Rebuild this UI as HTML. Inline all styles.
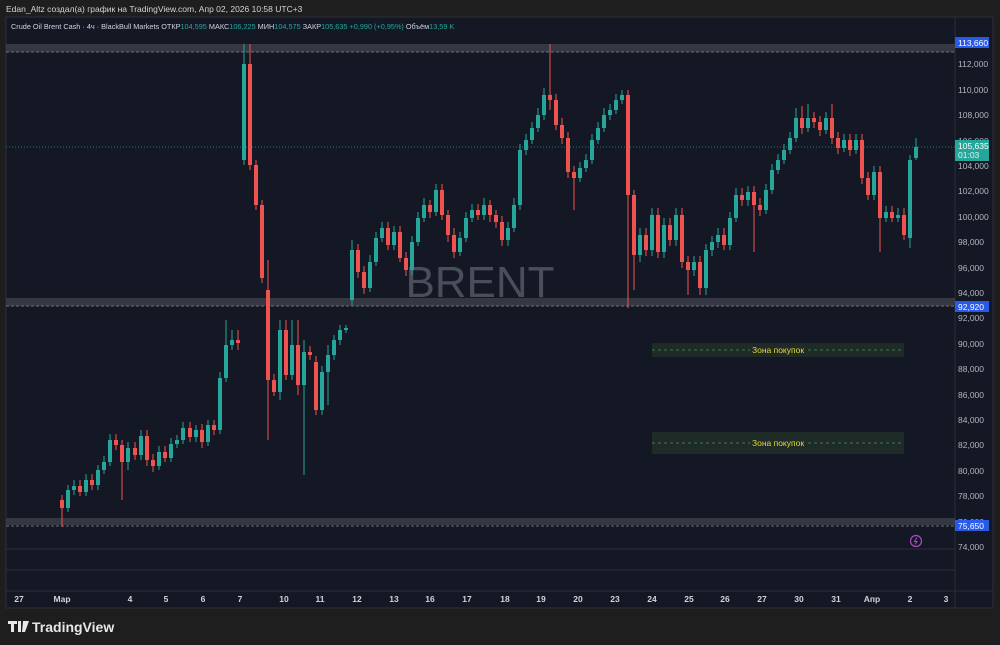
<!DOCTYPE html>
<html><head><meta charset="utf-8"><style>
html,body{margin:0;padding:0;background:#1e1e1e;width:1000px;height:645px;overflow:hidden;font-family:"Liberation Sans","Noto Sans CJK SC",sans-serif}
svg text{font-family:"Liberation Sans","Noto Sans CJK SC",sans-serif}
</style></head><body>
<svg width="1000" height="645" xmlns="http://www.w3.org/2000/svg">
<rect width="1000" height="645" fill="#1e1e1e"/>
<text x="6" y="12" font-size="8.5" fill="#d1d4dc">Edan_Altz создал(а) график на TradingView.com, Апр 02, 2026 10:58 UTC+3</text>
<rect x="6" y="17" width="987" height="591" fill="#141824" stroke="#2e3038"/>
<line x1="6" y1="549" x2="955" y2="549" stroke="#2a2e39"/>
<line x1="6" y1="570" x2="955" y2="570" stroke="#2a2e39"/>
<line x1="6" y1="591" x2="993" y2="591" stroke="#2a2e39"/>
<line x1="955" y1="17" x2="955" y2="608" stroke="#2a2e39"/>
<text x="480" y="297" font-size="44" fill="#4a4e5a" text-anchor="middle">BRENT</text>
<rect x="6" y="44" width="949" height="8" fill="#3b3e48" opacity="0.85"/>
<line x1="6" y1="52" x2="955" y2="52" stroke="#6b6f7a" stroke-dasharray="3,2"/>
<rect x="6" y="298" width="949" height="8" fill="#3b3e48" opacity="0.85"/>
<line x1="6" y1="306" x2="955" y2="306" stroke="#6b6f7a" stroke-dasharray="3,2"/>
<rect x="6" y="518" width="949" height="7" fill="#3b3e48" opacity="0.85"/>
<line x1="6" y1="526" x2="955" y2="526" stroke="#6b6f7a" stroke-dasharray="3,2"/>
<rect x="652" y="343" width="252" height="14" fill="#1f2b26"/>
<line x1="652" y1="350" x2="904" y2="350" stroke="#3f7a50" stroke-dasharray="3,3"/>
<rect x="750" y="344" width="56" height="12" fill="#1f2b26"/>
<text x="778" y="353" font-size="8.5" fill="#e5d83a" text-anchor="middle">Зона покупок</text>
<rect x="652" y="432" width="252" height="22" fill="#1f2b26"/>
<line x1="652" y1="443" x2="904" y2="443" stroke="#3f7a50" stroke-dasharray="3,3"/>
<rect x="750" y="437" width="56" height="12" fill="#1f2b26"/>
<text x="778" y="446" font-size="8.5" fill="#e5d83a" text-anchor="middle">Зона покупок</text>
<line x1="6" y1="147" x2="955" y2="147" stroke="#26a69a" stroke-dasharray="1,2" opacity="0.7"/>

<path stroke="#26a69a" stroke-width="1" fill="none" d="M68 485V512 M74 480V495 M86 474V496 M98 465V490 M104 456V474 M110 434V466 M128 442V470 M141 430V460 M159 446V470 M171 438V462 M177 435V448 M183 422V444 M196 425V442 M208 420V446 M220 372V434 M226 320V382 M232 330V350 M244 44V165 M280 320V400 M292 320V380 M304 340V475 M322 366V415 M328 345V405 M334 335V360 M340 325V345 M346 325V333 M352 240V305 M370 255V292 M376 232V266 M382 222V242 M394 226V250 M412 236V275 M418 212V246 M424 198V222 M436 184V216 M460 232V256 M466 212V242 M472 204V222 M484 198V220 M508 222V246 M514 198V232 M520 144V210 M526 134V155 M532 122V144 M538 108V132 M544 88V120 M580 162V182 M586 154V172 M592 134V164 M598 122V144 M604 108V132 M610 104V120 M616 94V114 M622 90V104 M640 228V262 M652 208V256 M664 218V258 M676 208V246 M694 256V276 M706 244V295 M712 236V256 M718 228V248 M730 212V250 M736 188V222 M748 186V206 M766 184V214 M772 164V194 M778 154V174 M784 144V164 M790 132V154 M796 108V142 M808 104V132 M826 112V134 M844 134V152 M856 134V154 M874 166V200 M886 206V222 M898 208V222 M910 155V248 M916 138V160"/>
<path stroke="#ef5350" stroke-width="1" fill="none" d="M62 495V527 M80 480V496 M92 474V490 M116 434V450 M122 440V500 M135 442V460 M147 430V466 M153 454V472 M165 446V462 M190 422V442 M202 424V448 M214 420V435 M238 330V350 M250 44V170 M256 160V210 M262 200V283 M268 260V440 M274 374V396 M286 320V380 M298 320V395 M310 346V360 M316 356V415 M358 244V278 M364 266V294 M388 222V250 M400 226V262 M406 252V276 M430 200V218 M442 184V220 M448 210V242 M454 228V258 M478 204V220 M490 200V222 M496 210V228 M502 216V246 M550 44V110 M556 94V130 M562 118V144 M568 132V178 M574 166V210 M628 90V308 M634 190V290 M646 228V256 M658 208V258 M670 218V246 M682 208V268 M688 256V295 M700 256V295 M724 228V250 M742 188V206 M754 186V252 M760 198V216 M802 106V134 M814 112V128 M820 116V136 M832 104V144 M838 132V154 M850 134V156 M862 134V184 M868 172V200 M880 166V252 M892 206V222 M904 208V240"/>
<path fill="#26a69a" d="M66 490h4v18h-4z M72 486h4v4h-4z M84 480h4v12h-4z M96 470h4v15h-4z M102 462h4v8h-4z M108 440h4v22h-4z M126 448h4v14h-4z M139 436h4v19h-4z M157 452h4v14h-4z M169 444h4v14h-4z M175 440h4v4h-4z M181 428h4v12h-4z M194 430h4v7h-4z M206 425h4v17h-4z M218 378h4v52h-4z M224 345h4v33h-4z M230 340h4v5h-4z M242 64h4v96h-4z M278 330h4v62h-4z M290 345h4v30h-4z M302 352h4v33h-4z M320 372h4v38h-4z M326 355h4v17h-4z M332 340h4v15h-4z M338 330h4v10h-4z M344 328h4v2h-4z M350 250h4v50h-4z M368 262h4v26h-4z M374 238h4v24h-4z M380 228h4v10h-4z M392 232h4v13h-4z M410 242h4v28h-4z M416 218h4v24h-4z M422 205h4v13h-4z M434 190h4v22h-4z M458 238h4v14h-4z M464 218h4v20h-4z M470 210h4v8h-4z M482 205h4v10h-4z M506 228h4v12h-4z M512 205h4v23h-4z M518 150h4v55h-4z M524 140h4v10h-4z M530 128h4v12h-4z M536 115h4v13h-4z M542 95h4v20h-4z M578 168h4v10h-4z M584 160h4v8h-4z M590 140h4v20h-4z M596 128h4v12h-4z M602 115h4v13h-4z M608 110h4v5h-4z M614 100h4v10h-4z M620 95h4v5h-4z M638 235h4v20h-4z M650 215h4v35h-4z M662 225h4v27h-4z M674 215h4v25h-4z M692 262h4v8h-4z M704 250h4v38h-4z M710 242h4v8h-4z M716 235h4v7h-4z M728 218h4v27h-4z M734 195h4v23h-4z M746 192h4v8h-4z M764 190h4v20h-4z M770 170h4v20h-4z M776 160h4v10h-4z M782 150h4v10h-4z M788 138h4v12h-4z M794 118h4v20h-4z M806 118h4v10h-4z M824 118h4v12h-4z M842 140h4v8h-4z M854 140h4v10h-4z M872 172h4v23h-4z M884 212h4v6h-4z M896 215h4v3h-4z M908 160h4v78h-4z M914 147h4v11h-4z"/>
<path fill="#ef5350" d="M60 500h4v8h-4z M78 486h4v6h-4z M90 480h4v5h-4z M114 440h4v5h-4z M120 445h4v17h-4z M133 448h4v7h-4z M145 436h4v24h-4z M151 460h4v6h-4z M163 452h4v6h-4z M188 428h4v9h-4z M200 430h4v12h-4z M212 425h4v5h-4z M236 340h4v3h-4z M248 64h4v101h-4z M254 165h4v40h-4z M260 205h4v73h-4z M266 290h4v90h-4z M272 380h4v12h-4z M284 330h4v45h-4z M296 345h4v40h-4z M308 352h4v3h-4z M314 362h4v48h-4z M356 250h4v22h-4z M362 272h4v16h-4z M386 228h4v17h-4z M398 232h4v26h-4z M404 258h4v12h-4z M428 205h4v7h-4z M440 190h4v25h-4z M446 215h4v20h-4z M452 235h4v17h-4z M476 210h4v5h-4z M488 205h4v10h-4z M494 215h4v7h-4z M500 222h4v18h-4z M548 95h4v5h-4z M554 100h4v25h-4z M560 125h4v13h-4z M566 138h4v34h-4z M572 172h4v6h-4z M626 95h4v100h-4z M632 195h4v60h-4z M644 235h4v15h-4z M656 215h4v37h-4z M668 225h4v15h-4z M680 215h4v47h-4z M686 262h4v8h-4z M698 262h4v26h-4z M722 235h4v10h-4z M740 195h4v5h-4z M752 192h4v13h-4z M758 205h4v5h-4z M800 118h4v10h-4z M812 118h4v4h-4z M818 122h4v8h-4z M830 118h4v20h-4z M836 138h4v10h-4z M848 140h4v10h-4z M860 140h4v38h-4z M866 178h4v17h-4z M878 172h4v46h-4z M890 212h4v6h-4z M902 215h4v20h-4z"/>

<g font-size="8.5" fill="#b2b5be">
<text x="958" y="67">112,000</text><text x="958" y="93">110,000</text><text x="958" y="118">108,000</text><text x="958" y="144">106,000</text><text x="958" y="169">104,000</text><text x="958" y="194">102,000</text><text x="958" y="220">100,000</text><text x="958" y="245">98,000</text><text x="958" y="271">96,000</text><text x="958" y="296">94,000</text><text x="958" y="321">92,000</text><text x="958" y="347">90,000</text><text x="958" y="372">88,000</text><text x="958" y="398">86,000</text><text x="958" y="423">84,000</text><text x="958" y="448">82,000</text><text x="958" y="474">80,000</text><text x="958" y="499">78,000</text><text x="958" y="525">76,000</text><text x="958" y="550">74,000</text>
</g>
<rect x="955" y="37" width="34" height="11" fill="#2962ff" opacity="0.9"/>
<text x="958" y="46" font-size="8.5" fill="#fff">113,660</text>
<rect x="955" y="140" width="34" height="21" fill="#26a69a"/>
<text x="958" y="149" font-size="8.5" fill="#fff">105,635</text>
<text x="958" y="158" font-size="8.5" fill="#e0f2f1">01:03</text>
<rect x="955" y="301" width="34" height="11" fill="#2962ff" opacity="0.9"/>
<text x="958" y="310" font-size="8.5" fill="#fff">92,920</text>
<rect x="955" y="520" width="34" height="11" fill="#2962ff" opacity="0.9"/>
<text x="958" y="529" font-size="8.5" fill="#fff">75,650</text>
<circle cx="916" cy="541" r="5.5" fill="none" stroke="#b04ac8" stroke-width="1.2"/>
<path d="M917 537.5 L914.5 541.5 L917 541.5 L915 544.5" stroke="#b04ac8" fill="none" stroke-width="1"/>
<text x="11" y="29" font-size="7.3" fill="#d1d4dc">Crude Oil Brent Cash · 4ч · BlackBull Markets  ОТКР<tspan fill="#26a69a">104,595</tspan>  МАКС<tspan fill="#26a69a">106,225</tspan>  МИН<tspan fill="#26a69a">104,575</tspan>  ЗАКР<tspan fill="#26a69a">105,635  +0,990 (+0,95%)</tspan>  Объём<tspan fill="#26a69a">13,59 K</tspan></text>
<g font-size="8.5" fill="#d1d4dc" font-weight="bold" text-anchor="middle">
<text x="19" y="602">27</text><text x="62" y="602">Мар</text><text x="130" y="602">4</text><text x="166" y="602">5</text><text x="203" y="602">6</text><text x="240" y="602">7</text><text x="284" y="602">10</text><text x="320" y="602">11</text><text x="357" y="602">12</text><text x="394" y="602">13</text><text x="430" y="602">16</text><text x="467" y="602">17</text><text x="505" y="602">18</text><text x="541" y="602">19</text><text x="578" y="602">20</text><text x="615" y="602">23</text><text x="652" y="602">24</text><text x="689" y="602">25</text><text x="725" y="602">26</text><text x="762" y="602">27</text><text x="799" y="602">30</text><text x="836" y="602">31</text><text x="872" y="602">Апр</text><text x="910" y="602">2</text><text x="946" y="602">3</text>
</g>
<g fill="#e8e8e8">
<path d="M8 621h9v3h-3v8h-3v-8h-3z"/><path d="M18 621h3v11h-3z"/>
<path d="M23 621h6l-4 11h-3z"/>
<text x="32" y="632" font-size="14" font-weight="bold">TradingView</text>
</g>
</svg>
</body></html>
